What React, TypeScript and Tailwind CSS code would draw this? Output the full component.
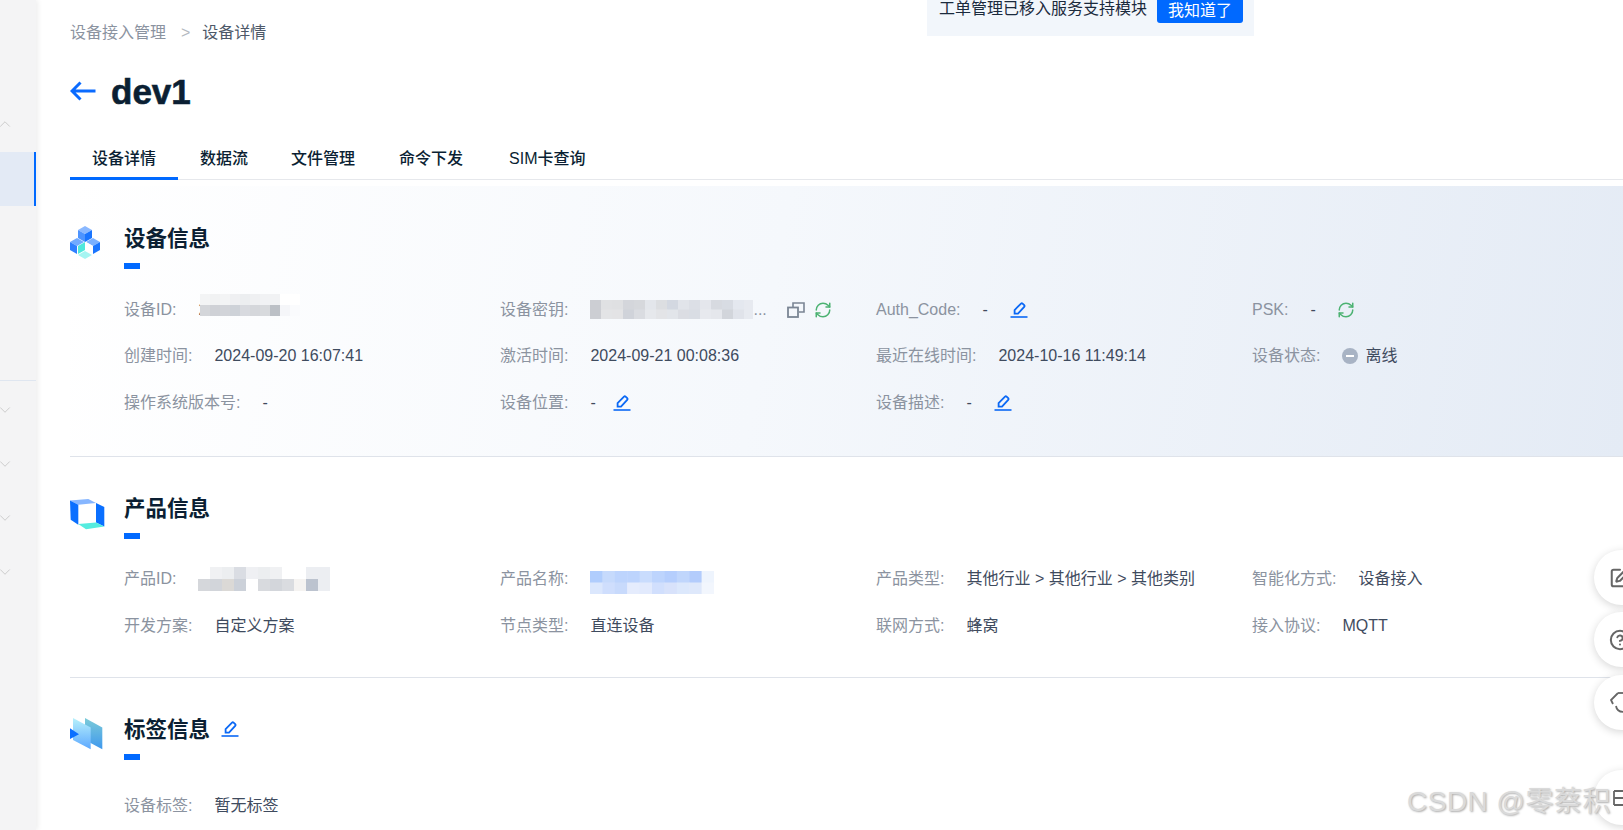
import { ChevronDown, ChevronUp, CircleHelp, RefreshCw, SquarePen } from "lucide-react";
import type { ReactNode } from "react";

const font = "font-['Liberation_Sans','Noto_Sans_CJK_SC',sans-serif]";

function Mosaic({ cell, rows, w, h }: { cell: number; rows: string[][]; w: number; h: number }) {
  return (
    <svg width={w} height={h} className="block shrink-0">
      {rows.map((row, y) =>
        row.map((c, x) => <rect key={x + "-" + y} x={x * cell} y={y * (h / rows.length)} width={cell + 0.5} height={h / rows.length + 0.5} fill={c} />),
      )}
    </svg>
  );
}

function Pencil({ className = "" }: { className?: string }) {
  return (
    <svg width="18" height="16" viewBox="0 0 18 16" fill="none" className={"shrink-0 " + className}>
      <path d="M4.6 11.6 L4.6 8 L11 1.6 Q11.8 0.9 12.6 1.6 L14.2 3.2 Q14.9 4 14.2 4.8 L8 11.6 Z" stroke="#0a68f5" strokeWidth="1.8" />
      <path d="M0.5 15 H17.5" stroke="#0a68f5" strokeWidth="1.6" />
    </svg>
  );
}

function CopyIcon({ className = "" }: { className?: string }) {
  return (
    <svg width="18" height="16" viewBox="0 0 18 16" fill="none" className={"shrink-0 " + className}>
      <path d="M6 5 V1 H17 V10 H12" stroke="#7b8594" strokeWidth="1.6" />
      <rect x="1" y="5.5" width="10" height="9.5" stroke="#7b8594" strokeWidth="1.8" />
    </svg>
  );
}

function Refresh({ className = "" }: { className?: string }) {
  return <RefreshCw size={18} strokeWidth={2} className={"shrink-0 text-[#4cb272] " + className} />;
}

function Field({ label, children, className = "" }: { label: string; children?: ReactNode; className?: string }) {
  return (
    <div className={"flex items-center whitespace-nowrap pt-[3px] " + className}>
      <span className="mr-[22px] text-[#8b93a0]">{label}</span>
      {children}
    </div>
  );
}

function Value({ children }: { children: ReactNode }) {
  return <span className="text-[#3f4b5e]">{children}</span>;
}

function CubesIcon() {
  return (
    <svg width="30" height="33" viewBox="0 0 30 33">
      <polygon points="15,0 22,4 15,8 8,4" fill="#8ab8ff" />
      <polygon points="8,4 15,8 15,16 8,12" fill="#4d94ff" />
      <polygon points="22,4 15,8 15,16 22,12" fill="#1a75ff" />
      <polygon points="7,12 14,16 7,20 0,16" fill="#72abff" />
      <polygon points="0,16 7,20 7,28 0,24" fill="#2f80ff" />
      <polygon points="8,20 15,16 15,24 8,28" fill="#4fe8dc" />
      <polygon points="23,12 30,16 23,20 16,16" fill="#7ab0ff" />
      <polygon points="30,16 23,20 23,28 30,24" fill="#1a75ff" />
      <polygon points="16,16 23,20 23,28 16,24" fill="#ffffff" />
      <polygon points="15,25 22,29 15,33 8,29" fill="#a6f5f2" />
    </svg>
  );
}

function BoxIcon() {
  return (
    <svg width="35" height="31" viewBox="0 0 35 31">
      <polygon points="0,1.5 18.3,0 26,4 8.3,5.8" fill="#86b6ff" />
      <polygon points="0,1.5 8.3,5.8 8.3,25.8 0.7,20.8" fill="#0a6fff" />
      <polygon points="26,4 34.3,8 34.3,27.5 26,23.5" fill="#0a6fff" />
      <polygon points="8.3,25 26,23.5 34.3,27.5 16,30.3" fill="#55ecdf" />
    </svg>
  );
}

function TagsIcon() {
  return (
    <svg width="33" height="32" viewBox="0 0 33 32">
      <defs>
        <linearGradient id="tagBack" x1="0" y1="0" x2="0" y2="1">
          <stop offset="0" stopColor="#7ccbd8" />
          <stop offset="1" stopColor="#3f98ee" />
        </linearGradient>
        <linearGradient id="tagFront" x1="0" y1="0" x2="0" y2="1">
          <stop offset="0" stopColor="#b8f1fb" />
          <stop offset="1" stopColor="#5ca8ff" />
        </linearGradient>
      </defs>
      <polygon points="15,0 32.3,9.5 32.3,31.3 15,22" fill="url(#tagBack)" />
      <polygon points="3,0 20.7,9.5 20.7,31.3 3,22" fill="url(#tagFront)" />
      <polygon points="0,10.3 9,16.3 0,21" fill="#0a6fff" />
    </svg>
  );
}

function Section({
  icon,
  iconClass,
  title,
  titleExtra,
  gridClass,
  className,
  children,
}: {
  icon: ReactNode;
  iconClass: string;
  title: string;
  titleExtra?: ReactNode;
  gridClass: string;
  className: string;
  children: ReactNode;
}) {
  return (
    <section className={"flex " + className}>
      <div className={"w-[54px] shrink-0 " + iconClass}>{icon}</div>
      <div className="min-w-0 flex-1">
        <div className="flex h-[32px] items-center">
          <h2 className="pt-[3px] text-[21.5px] font-bold text-[#0b1f33]">{title}</h2>
          {titleExtra}
        </div>
        <div className="mt-[9px] h-[6px] w-[16px] bg-[#0069ff]" />
        <div className={"grid grid-cols-[repeat(4,376px)] auto-rows-[46.5px] " + gridClass}>{children}</div>
      </div>
    </section>
  );
}

const idRows = [
  ["#f3f4f5", "#f1f2f3", "#f3f4f5", "#eff0f2", "#eceef0", "#eff0f2", "#f1f2f4", "#f1f2f4", "#ffffff", "#ffffff"],
  ["#d4d6da", "#cfd1d6", "#d2d4d9", "#ced2d8", "#d8dadf", "#d5d7db", "#d8dadd", "#bcc0c6", "#f5f6f9", "#fafbfd"],
];
const keyRows = [
  ["#ccced3", "#e0e1e3", "#dfe0e2", "#d4d6db", "#d6d8dc", "#e3e6eb", "#dcdee1", "#d3d8e1", "#e1e4ea", "#dcdfe6", "#e4e6ec", "#d7dae0", "#d8dce3", "#e4e8ef", "#e7eaf0"],
  ["#ccced3", "#e3e4e6", "#e3e3e5", "#d0d3da", "#dadce1", "#e6e8ec", "#e3e4e7", "#e2e5ea", "#dbdde3", "#d9dde4", "#e7e9ee", "#e5e7ec", "#d2d5db", "#e0e3ea", "#e7eaf0"],
];
const productRows = [
  ["#ffffff", "#f0f1f3", "#eceef0", "#dadde3", "#eff0f3", "#eceef0", "#f0f1f3", "#ffffff", "#ffffff", "#eceef2", "#eceef2"],
  ["#d5d7db", "#d2d5da", "#dbd9d6", "#ccd1d9", "#ffffff", "#d8dade", "#d3d6db", "#dadce0", "#f5f3f1", "#bcc3cf", "#eceef2"],
];
const nameRows = [
  ["#b0cdfd", "#c6dafc", "#bdd4fd", "#bdd4fd", "#c9dcfd", "#bdd4fd", "#b5cefd", "#c0d6fc", "#b3ccfc", "#eef4fd"],
  ["#dbe7fd", "#cfdefd", "#c8dafc", "#e5ecfd", "#e2eafd", "#d1dffd", "#d8e2fb", "#dce8fc", "#dee8fb", "#f2f6fd"],
];

const floatBtn =
  "absolute left-[1594px] z-20 flex h-[55px] w-[55px] items-center rounded-full bg-white text-[#666] shadow-[0_2px_8px_rgba(0,0,0,0.16)]";

export default function App() {
  return (
    <div className={"relative flex h-[830px] w-[1623px] overflow-hidden bg-white text-[16px] " + font}>
      {/* Sidebar, only its edge is on screen */}
      <aside className="z-10 w-[36px] shrink-0 bg-[#f4f4f5] pt-[97px] shadow-[2px_0_5px_rgba(0,0,0,0.07)]">
        <div className="flex h-[54px] items-center">
          <ChevronUp size={18} strokeWidth={1.1} className="-ml-[4px] text-[#c4c4c4]" />
        </div>
        <div className="mt-px h-[54px] border-r-2 border-[#0069ff] bg-[#e3eaf5]" />
        <div className="h-[175px] border-b border-[#dfe6f0]" />
        <div className="pt-[2px]">
          {[0, 1, 2, 3].map((i) => (
            <div key={i} className="flex h-[54px] items-center">
              <ChevronDown size={18} strokeWidth={1.1} className="-ml-[4px] text-[#c4c4c4]" />
            </div>
          ))}
        </div>
      </aside>

      <main className="min-w-0 flex-1 pl-[34px] pt-[20px]">
        <div className="flex h-[24px] items-center pt-[2px]">
          <span className="text-[#8b93a0]">设备接入管理</span>
          <span className="ml-[15px] text-[#b4b9c1]">&gt;</span>
          <span className="ml-[12px] text-[#4d5868]">设备详情</span>
        </div>

        <div className="mt-[26px] flex h-[44px] items-center">
          <svg width="26" height="20" viewBox="0 0 26 20" fill="none" className="mb-[3px] shrink-0">
            <path d="M25.5 10 H2 M10.5 1.5 L2 10 L10.5 18.5" stroke="#0a6bff" strokeWidth="3" />
          </svg>
          <h1 className="ml-[15px] text-[35px] font-bold text-[#0b1f33] [-webkit-text-stroke:0.6px_#0b1f33]">dev1</h1>
        </div>

        <div className="mt-[23px] flex h-[43px] border-b border-[#e6e8ec] pt-[1px] font-medium text-[#0b1f33]">
          <div className="relative flex items-center px-[22px]">
            <span className="pt-[1px]">设备详情</span>
            <div className="absolute bottom-[-1px] left-0 right-0 h-[3px] bg-[#0069ff]" />
          </div>
          <div className="flex items-center pl-[22px] pr-[21px] pt-[1px]">数据流</div>
          <div className="flex items-center px-[22px] pt-[1px]">文件管理</div>
          <div className="flex items-center px-[22px] pt-[1px]">命令下发</div>
          <div className="flex items-center pl-[24px] pt-[1px]">SIM卡查询</div>
        </div>

        <Section
          icon={<CubesIcon />}
          iconClass="mt-[4px]"
          title="设备信息"
          gridClass="mt-[16px]"
          className="mt-[6px] border-b border-[#dfe3ea] bg-[linear-gradient(100deg,#ffffff_0%,#f5f8fc_45%,#e4ebf5_100%)] pb-[31px] pt-[36px]"
        >
          <Field label="设备ID:">
            <div className="relative">
              <Value>2</Value>
              <div className="absolute -top-[4px] left-[2px]">
                <Mosaic cell={10} w={100} h={22} rows={idRows} />
              </div>
            </div>
          </Field>
          <Field label="设备密钥:">
            <Mosaic cell={11} w={163} h={19} rows={keyRows} />
            <span className="text-[#8b93a0]">...</span>
            <CopyIcon className="ml-[20px]" />
            <Refresh className="ml-[9px]" />
          </Field>
          <Field label="Auth_Code:">
            <Value>-</Value>
            <Pencil className="ml-[22px]" />
          </Field>
          <Field label="PSK:">
            <Value>-</Value>
            <Refresh className="ml-[21px]" />
          </Field>

          <Field label="创建时间:">
            <Value>2024-09-20 16:07:41</Value>
          </Field>
          <Field label="激活时间:">
            <Value>2024-09-21 00:08:36</Value>
          </Field>
          <Field label="最近在线时间:">
            <Value>2024-10-16 11:49:14</Value>
          </Field>
          <Field label="设备状态:">
            <span className="flex h-[16px] w-[16px] items-center justify-center rounded-full bg-[#a8b3c4]">
              <span className="h-[2px] w-[8px] bg-white" />
            </span>
            <span className="ml-[7px] text-[#3f4b5e]">离线</span>
          </Field>

          <Field label="操作系统版本号:">
            <Value>-</Value>
          </Field>
          <Field label="设备位置:">
            <Value>-</Value>
            <Pencil className="ml-[17px]" />
          </Field>
          <Field label="设备描述:">
            <Value>-</Value>
            <Pencil className="ml-[22px]" />
          </Field>
        </Section>

        <Section
          icon={<BoxIcon />}
          iconClass="mt-[7px]"
          title="产品信息"
          gridClass="mt-[16px]"
          className="border-b border-[#dfe3ea] pb-[29px] pt-[35px]"
        >
          <Field label="产品ID:">
            <Mosaic cell={12} w={132} h={24} rows={productRows} />
          </Field>
          <Field label="产品名称:">
            <div className="pt-[6px]">
              <Mosaic cell={12.4} w={124} h={23} rows={nameRows} />
            </div>
          </Field>
          <Field label="产品类型:">
            <Value>其他行业 &gt; 其他行业 &gt; 其他类别</Value>
          </Field>
          <Field label="智能化方式:">
            <Value>设备接入</Value>
          </Field>

          <Field label="开发方案:">
            <Value>自定义方案</Value>
          </Field>
          <Field label="节点类型:">
            <Value>直连设备</Value>
          </Field>
          <Field label="联网方式:">
            <Value>蜂窝</Value>
          </Field>
          <Field label="接入协议:">
            <Value>MQTT</Value>
          </Field>
        </Section>

        <Section
          icon={<TagsIcon />}
          iconClass="mt-[5px]"
          title="标签信息"
          titleExtra={<Pencil className="ml-[11px]" />}
          gridClass="mt-[22px]"
          className="pt-[35px]"
        >
          <Field label="设备标签:">
            <Value>暂无标签</Value>
          </Field>
        </Section>
      </main>

      {/* Notice at the top edge */}
      <div className="absolute left-[927px] top-0 z-20 flex h-[36px] w-[327px] items-start bg-[#f2f6fb] pl-[12px] text-[#1b2a3d]">
        <span className="mt-[-3px] leading-[24px]">工单管理已移入服务支持模块</span>
        <button className="ml-[10px] flex h-[23px] w-[86px] items-center justify-center rounded-b-[3px] bg-[#0069ff] pb-[2px] text-white">我知道了</button>
      </div>

      {/* Floating buttons, cut by the window edge */}
      <div className={floatBtn + " top-[550px] pl-[15px]"}>
        <SquarePen size={22} strokeWidth={2.2} />
      </div>
      <div className={floatBtn + " top-[612px] pl-[15px]"}>
        <CircleHelp size={22} strokeWidth={2.2} />
      </div>
      <div className={floatBtn + " top-[675px] pl-[16px]"}>
        <svg width="22" height="24" viewBox="0 0 22 24" fill="none" stroke="currentColor" strokeWidth="1.8">
          <path d="M8 2 L1 9 L3 13" />
          <path d="M8 2 H22" />
          <path d="M6 15 Q7 21 14 21" />
        </svg>
      </div>
      <div className={floatBtn + " top-[770px] pl-[19px]"}>
        <svg width="20" height="16" viewBox="0 0 20 16" fill="none" stroke="currentColor" strokeWidth="1.8">
          <path d="M1 1 V15 M1 1 H20 M1 8 H20 M1 15 H20" />
        </svg>
      </div>

      {/* Site watermark */}
      <div className="pointer-events-none absolute left-[1407px] top-[783px] z-30 whitespace-nowrap text-[28px] leading-[38px] tracking-[0.5px] text-[#dadada] [text-shadow:1px_1px_2px_#aaaaaa]">
        CSDN @零蔡积
      </div>
    </div>
  );
}
